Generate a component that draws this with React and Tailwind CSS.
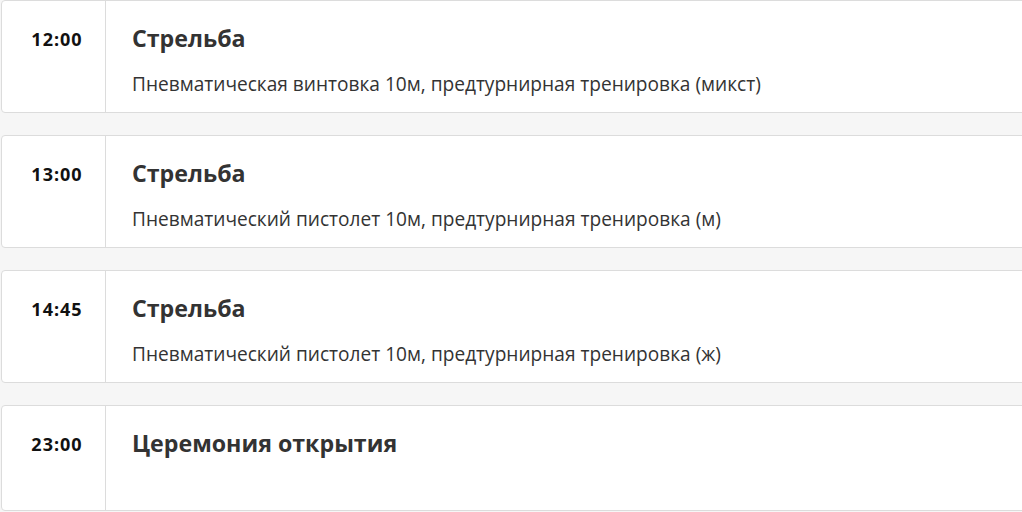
const events = [
  {
    time: "12:00",
    title: "Стрельба",
    details: "Пневматическая винтовка 10м, предтурнирная тренировка (микст)",
  },
  {
    time: "13:00",
    title: "Стрельба",
    details: "Пневматический пистолет 10м, предтурнирная тренировка (м)",
  },
  {
    time: "14:45",
    title: "Стрельба",
    details: "Пневматический пистолет 10м, предтурнирная тренировка (ж)",
  },
  {
    time: "23:00",
    title: "Церемония открытия",
  },
];

export default function App() {
  return (
    <div
      className="min-h-screen bg-[#f6f6f6] pl-px flex flex-col gap-[22px]"
      style={{ fontFamily: '"Open Sans", "Noto Sans", sans-serif' }}
    >
      {events.map((ev) => (
        <EventRow key={ev.time} {...ev} />
      ))}
    </div>
  );
}

function EventRow({ time, title, details }) {
  return (
    <div className="flex min-h-[106px] w-[1040px] bg-white border border-[#dcdcdc] rounded-[4px]">
      {/* Time */}
      <div className="w-[104px] shrink-0 border-r border-[#dcdcdc] pt-[26px] pl-[7px] text-center">
        <span className="text-[18px] leading-[24px] tracking-[1px] font-bold text-[#111]">{time}</span>
      </div>

      {/* Content */}
      <div className="flex-1 pl-[26px] pt-[21px] pb-[15px]">
        <h3 className="text-[23.2px] leading-[32px] font-bold text-[#333]">{title}</h3>
        {details && (
          <p className="mt-[17px] text-[19.1px] leading-[26px] text-[#333]">{details}</p>
        )}
      </div>
    </div>
  );
}
